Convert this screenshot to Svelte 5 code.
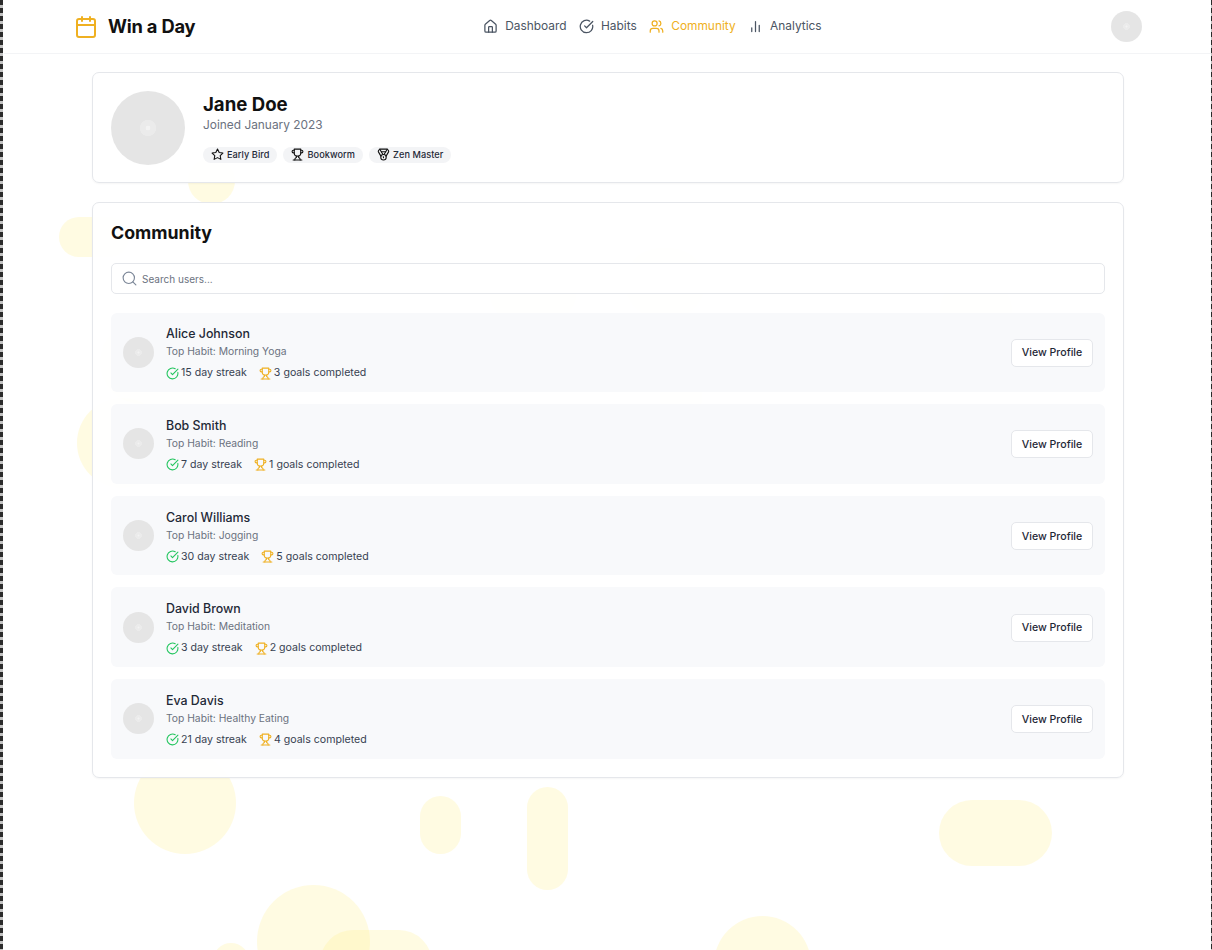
<script>
	const users = [
		{ name: 'Alice Johnson', habit: 'Morning Yoga', streak: 15, goals: 3 },
		{ name: 'Bob Smith', habit: 'Reading', streak: 7, goals: 1 },
		{ name: 'Carol Williams', habit: 'Jogging', streak: 30, goals: 5 },
		{ name: 'David Brown', habit: 'Meditation', streak: 3, goals: 2 },
		{ name: 'Eva Davis', habit: 'Healthy Eating', streak: 21, goals: 4 }
	];

	// decorative blobs behind the page: x, y, w, h
	const blobs = [
		[188, 158, 47, 46],
		[59, 217, 70, 40],
		[625, 248, 80, 70],
		[490, 270, 86, 50],
		[940, 280, 72, 60],
		[100, 320, 190, 84],
		[660, 360, 42, 60],
		[77, 398, 90, 90],
		[134, 752, 102, 102],
		[420, 796, 41, 58],
		[527, 787, 41, 103],
		[939, 800, 113, 66],
		[257, 885, 113, 113],
		[320, 930, 112, 66],
		[213, 943, 36, 36],
		[714, 916, 97, 97]
	];
</script>

<div class="page">
	<div class="blobs">
		{#each blobs as b}
			<span class="blob" style="left:{b[0]}px;top:{b[1]}px;width:{b[2]}px;height:{b[3]}px"></span>
		{/each}
	</div>

	<header class="topbar">
		<div class="brand">
			<svg class="brand-icon" viewBox="0 0 24 24"><path d="M8 2v4M16 2v4M3 10h18"/><rect x="3" y="4" width="18" height="18" rx="2"/></svg>
			<span>Win a Day</span>
		</div>
		<nav class="nav">
			<a href="#/">
				<svg viewBox="0 0 24 24"><path d="M15 21v-8a1 1 0 0 0-1-1h-4a1 1 0 0 0-1 1v8"/><path d="M3 10a2 2 0 0 1 .709-1.528l7-5.999a2 2 0 0 1 2.582 0l7 5.999A2 2 0 0 1 21 10v9a2 2 0 0 1-2 2H5a2 2 0 0 1-2-2z"/></svg>
				<span>Dashboard</span>
			</a>
			<a href="#/">
				<svg viewBox="0 0 24 24"><path d="M21.801 10A10 10 0 1 1 17 3.335"/><path d="m9 11 3 3L22 4"/></svg>
				<span>Habits</span>
			</a>
			<a href="#/" class="active">
				<svg viewBox="0 0 24 24"><path d="M16 21v-2a4 4 0 0 0-4-4H6a4 4 0 0 0-4 4v2"/><circle cx="9" cy="7" r="4"/><path d="M22 21v-2a4 4 0 0 0-3-3.87"/><path d="M16 3.13a4 4 0 0 1 0 7.75"/></svg>
				<span>Community</span>
			</a>
			<a href="#/">
				<svg viewBox="0 0 24 24"><path d="M18 20v-10M12 20V4M6 20v-6"/></svg>
				<span>Analytics</span>
			</a>
		</nav>
		<div class="avatar small"></div>
	</header>

	<main class="content">
		<section class="card profile">
			<div class="avatar large"></div>
			<div class="profile-info">
				<h1>Jane Doe</h1>
				<p class="joined">Joined January 2023</p>
				<div class="badges">
					<span class="badge">
						<svg viewBox="0 0 24 24"><polygon points="12 2 15.09 8.26 22 9.27 17 14.14 18.18 21.02 12 17.77 5.82 21.02 7 14.14 2 9.27 8.91 8.26 12 2"/></svg>
						Early Bird
					</span>
					<span class="badge">
						<svg viewBox="0 0 24 24"><path d="M6 9H4.5a2.5 2.5 0 0 1 0-5H6"/><path d="M18 9h1.5a2.5 2.5 0 0 0 0-5H18"/><path d="M4 22h16"/><path d="M10 14.66V17c0 .55-.47.98-.97 1.21C7.85 18.75 7 20.24 7 22"/><path d="M14 14.66V17c0 .55.47.98.97 1.21C16.15 18.75 17 20.24 17 22"/><path d="M18 2H6v7a6 6 0 0 0 12 0V2Z"/></svg>
						Bookworm
					</span>
					<span class="badge">
						<svg viewBox="0 0 24 24"><path d="M7.21 15 2.66 7.14a2 2 0 0 1 .13-2.2L4.4 2.8A2 2 0 0 1 6 2h12a2 2 0 0 1 1.6.8l1.6 2.14a2 2 0 0 1 .14 2.2L16.79 15"/><path d="M11 12 5.12 2.2"/><path d="m13 12 5.88-9.8"/><path d="M8 7h8"/><circle cx="12" cy="17" r="5"/><path d="M12 18v-2h-.5"/></svg>
						Zen Master
					</span>
				</div>
			</div>
		</section>

		<section class="card community">
			<h2>Community</h2>
			<div class="search">
				<svg viewBox="0 0 24 24"><circle cx="11" cy="11" r="8"/><path d="m21 21-4.3-4.3"/></svg>
				<span>Search users...</span>
			</div>
			<div class="user-list">
				{#each users as user}
					<div class="user-row">
						<div class="avatar medium"></div>
						<div class="user-info">
							<div class="user-name">{user.name}</div>
							<div class="user-habit">Top Habit: {user.habit}</div>
							<div class="user-stats">
								<span class="stat">
									<svg class="green" viewBox="0 0 24 24"><path d="M21.801 10A10 10 0 1 1 17 3.335"/><path d="m9 11 3 3L22 4"/></svg>
									{user.streak} day streak
								</span>
								<span class="stat">
									<svg class="amber" viewBox="0 0 24 24"><path d="M6 9H4.5a2.5 2.5 0 0 1 0-5H6"/><path d="M18 9h1.5a2.5 2.5 0 0 0 0-5H18"/><path d="M4 22h16"/><path d="M10 14.66V17c0 .55-.47.98-.97 1.21C7.85 18.75 7 20.24 7 22"/><path d="M14 14.66V17c0 .55.47.98.97 1.21C16.15 18.75 17 20.24 17 22"/><path d="M18 2H6v7a6 6 0 0 0 12 0V2Z"/></svg>
									{user.goals} goals completed
								</span>
							</div>
						</div>
						<button class="view-btn">View Profile</button>
					</div>
				{/each}
			</div>
		</section>
	</main>
</div>

<style>
	:global(body) {
		background: #fff;
		overflow: hidden;
	}

	.page {
		position: relative;
		height: 950px;
		overflow: hidden;
		box-sizing: border-box;
		padding-left: 4px;
		font-family: Inter, 'Liberation Sans', sans-serif;
		color: #111;
		background: #fff;
	}

	/* dashed strips on both window edges */
	.page::before,
	.page::after {
		content: '';
		position: absolute;
		top: 0;
		bottom: 0;
		z-index: 2;
		background: repeating-linear-gradient(180deg, #2b2b2b 0 5px, #c2c2c2 5px 8px);
	}

	.page::before {
		left: 0;
		width: 3px;
	}

	.page::after {
		right: 0;
		width: 1px;
	}

	.blobs {
		position: absolute;
		left: 0;
		top: 0;
		width: 1212px;
		height: 950px;
	}

	.blob {
		position: absolute;
		background: rgba(254, 240, 138, 0.25);
		border-radius: 9999px;
	}

	/* Top bar */
	.topbar {
		position: relative;
		display: flex;
		align-items: center;
		justify-content: space-between;
		box-sizing: border-box;
		height: 54px;
		padding: 0 70px 0 70px;
		background: #fff;
		border-bottom: 1px solid #f3f4f6;
	}

	.brand {
		display: flex;
		align-items: center;
		gap: 10px;
		font-size: 18.3px;
		font-weight: 700;
		letter-spacing: -0.2px;
	}

	.brand span {
		margin-bottom: 2px;
	}

	.brand-icon {
		width: 24px;
		height: 24px;
		color: #efb021;
	}

	svg {
		fill: none;
		stroke: currentColor;
		stroke-width: 2;
		stroke-linecap: round;
		stroke-linejoin: round;
		flex-shrink: 0;
	}

	.nav {
		display: flex;
		gap: 12.5px;
		margin-left: -1.5px;
	}

	.nav a {
		display: flex;
		align-items: center;
		gap: 7px;
		color: #4b5563;
		font-size: 11.9px;
		text-decoration: none;
	}

	.nav a span {
		margin-bottom: 2px;
	}

	.nav a.active {
		color: #efb021;
	}

	.nav svg {
		width: 15px;
		height: 15px;
	}

	/* Avatars */
	.avatar {
		flex-shrink: 0;
		border-radius: 50%;
		background: radial-gradient(circle, #f3f3f3 0 4%, #ebebeb 5% 15%, #e5e5e5 16%);
	}

	.avatar.small {
		width: 31px;
		height: 31px;
	}

	.avatar.medium {
		width: 31px;
		height: 31px;
	}

	.avatar.large {
		width: 74px;
		height: 74px;
	}

	/* Cards */
	.content {
		position: relative;
		width: 1032px;
		margin: 18px auto 0;
		display: flex;
		flex-direction: column;
		gap: 19px;
	}

	.card {
		box-sizing: border-box;
		background: rgba(255, 255, 255, 0.94);
		border: 1px solid #e5e7eb;
		border-radius: 7px;
		box-shadow: 0 1px 2px rgba(0, 0, 0, 0.04);
	}

	.profile {
		display: flex;
		align-items: center;
		gap: 18px;
		height: 111px;
		padding: 0 18px;
	}

	h1 {
		margin: 0;
		font-size: 18.6px;
		font-weight: 700;
		line-height: 24px;
	}

	.joined {
		margin: 0;
		font-size: 11.9px;
		line-height: 18px;
		color: #6b7280;
	}

	.badges {
		display: flex;
		gap: 6px;
		margin-top: 13px;
		padding-bottom: 1px;
	}

	.badge {
		display: flex;
		align-items: center;
		gap: 3px;
		height: 16px;
		padding: 0 8px;
		border-radius: 999px;
		background: #f3f4f6;
		font-size: 9.2px;
		font-weight: 500;
		letter-spacing: 0.05px;
		color: #1f2937;
	}

	.badge svg {
		width: 13px;
		height: 13px;
		stroke: #111;
	}

	.community {
		height: 576px;
		padding: 18px 18px 0;
	}

	h2 {
		margin: 0;
		font-size: 17.8px;
		font-weight: 700;
		line-height: 24px;
	}

	.search {
		display: flex;
		align-items: center;
		gap: 4px;
		box-sizing: border-box;
		height: 31px;
		margin-top: 18px;
		padding: 0 9px;
		background: #fff;
		border: 1px solid #e5e7eb;
		border-radius: 5px;
		font-size: 10px;
		color: #6b7280;
	}

	.search svg {
		width: 17px;
		height: 17px;
		color: #7c8798;
		stroke-width: 1.6;
	}

	.user-list {
		display: flex;
		flex-direction: column;
		gap: 12px;
		margin-top: 18.5px;
	}

	.user-row {
		display: flex;
		align-items: center;
		box-sizing: border-box;
		height: 79.67px;
		padding: 0 12px;
		background: #f8f9fb;
		border-radius: 6px;
	}

	.user-info {
		flex: 1;
		margin-left: 12px;
		padding-top: 2.8px;
	}

	.user-name {
		font-size: 12.4px;
		font-weight: 500;
		line-height: 17px;
		color: #1f2937;
	}

	.user-habit {
		font-size: 10.3px;
		line-height: 18px;
		color: #6b7280;
	}

	.user-stats {
		display: flex;
		gap: 12px;
		margin-top: 4px;
		font-size: 10.6px;
		line-height: 18px;
		color: #374151;
	}

	.stat {
		display: flex;
		align-items: center;
		gap: 2px;
	}

	.stat svg {
		width: 13px;
		height: 13px;
	}

	.green {
		color: #22c55e;
	}

	.amber {
		color: #efb021;
	}

	.view-btn {
		box-sizing: border-box;
		width: 82px;
		height: 28px;
		margin-top: 0.8px;
		padding: 0;
		background: #fff;
		border: 1px solid #e5e7eb;
		border-radius: 5px;
		font-family: inherit;
		font-size: 10.6px;
		font-weight: 450;
		color: #1f2937;
	}
</style>
